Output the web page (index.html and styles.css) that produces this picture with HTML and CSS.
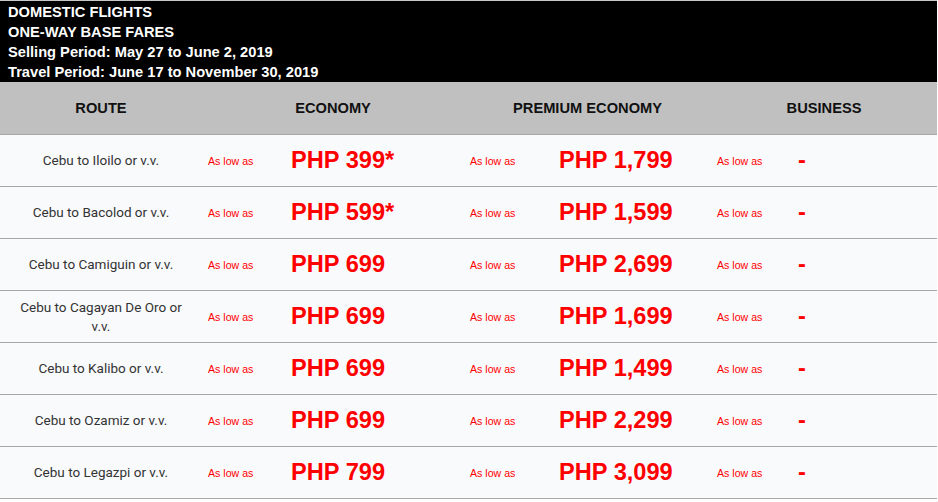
FILE: index.html
```html
<!DOCTYPE html>
<html>
<head>
<meta charset="utf-8">
<link rel="stylesheet" href="styles.css">
</head>
<body>
<div class="fares">
  <div class="title">
    <div>DOMESTIC FLIGHTS</div>
    <div>ONE-WAY BASE FARES</div>
    <div>Selling Period: May 27 to June 2, 2019</div>
    <div>Travel Period: June 17 to November 30, 2019</div>
  </div>
  <table class="grid">
    <colgroup>
      <col class="c-route"><col class="c-low1"><col class="c-eco"><col class="c-low2"><col class="c-prem"><col class="c-low3"><col class="c-bus">
    </colgroup>
    <thead>
      <tr>
        <th>ROUTE</th>
        <th colspan="2">ECONOMY</th>
        <th colspan="2">PREMIUM ECONOMY</th>
        <th colspan="2">BUSINESS</th>
      </tr>
    </thead>
    <tbody>
      <tr><td class="route">Cebu to Iloilo or v.v.</td><td class="low">As low as</td><td class="price">PHP 399*</td><td class="low">As low as</td><td class="price">PHP 1,799</td><td class="low">As low as</td><td class="price dash">-</td></tr>
      <tr><td class="route">Cebu to Bacolod or v.v.</td><td class="low">As low as</td><td class="price">PHP 599*</td><td class="low">As low as</td><td class="price">PHP 1,599</td><td class="low">As low as</td><td class="price dash">-</td></tr>
      <tr><td class="route">Cebu to Camiguin or v.v.</td><td class="low">As low as</td><td class="price">PHP 699</td><td class="low">As low as</td><td class="price">PHP 2,699</td><td class="low">As low as</td><td class="price dash">-</td></tr>
      <tr><td class="route">Cebu to Cagayan De Oro or v.v.</td><td class="low">As low as</td><td class="price">PHP 699</td><td class="low">As low as</td><td class="price">PHP 1,699</td><td class="low">As low as</td><td class="price dash">-</td></tr>
      <tr><td class="route">Cebu to Kalibo or v.v.</td><td class="low">As low as</td><td class="price">PHP 699</td><td class="low">As low as</td><td class="price">PHP 1,499</td><td class="low">As low as</td><td class="price dash">-</td></tr>
      <tr><td class="route">Cebu to Ozamiz or v.v.</td><td class="low">As low as</td><td class="price">PHP 699</td><td class="low">As low as</td><td class="price">PHP 2,299</td><td class="low">As low as</td><td class="price dash">-</td></tr>
      <tr><td class="route">Cebu to Legazpi or v.v.</td><td class="low">As low as</td><td class="price">PHP 799</td><td class="low">As low as</td><td class="price">PHP 3,099</td><td class="low">As low as</td><td class="price dash">-</td></tr>
    </tbody>
  </table>
</div>
</body>
</html>
```

FILE: styles.css
```css
html, body {
  margin: 0;
  padding: 0;
  background: #ffffff;
}

.fares {
  width: 937px;
  font-family: "Liberation Sans", Arial, sans-serif;
}

.title {
  background: #000000;
  color: #ffffff;
  border-top: 1px solid #c8c8c8;
  padding: 1px 8px 0;
  font-weight: bold;
  font-size: 11pt;
  line-height: 20px;
}

.grid {
  width: 937px;
  border-collapse: collapse;
  table-layout: fixed;
}

.c-route { width: 202px; }
.c-low1 { width: 83px; }
.c-eco { width: 179px; }
.c-low2 { width: 89px; }
.c-prem { width: 158px; }
.c-low3 { width: 80px; }
.c-bus { width: 146px; }

.grid th {
  background: #c0c0c0;
  height: 52px;
  padding: 0;
  font-size: 11pt;
  font-weight: bold;
  color: #111111;
  text-align: center;
  vertical-align: middle;
  border-bottom: 1px solid #a8a8a8;
}

.grid td {
  background: #f9fafc;
  height: 51px;
  padding: 0 0 0 6px;
  vertical-align: middle;
  border-bottom: 1px solid #a8a8a8;
}

.grid td.route {
  font-family: Roboto, "Liberation Sans", sans-serif;
  font-size: 13.5px;
  line-height: 19px;
  color: #333333;
  text-align: center;
  padding: 0 12px;
}

.grid td.low {
  color: #ff0000;
  font-size: 10.6px;
}

.grid td.price {
  color: #ff0000;
  font-size: 23.6px;
  font-weight: bold;
}

.grid td.dash {
  padding-left: 7px;
}
```
